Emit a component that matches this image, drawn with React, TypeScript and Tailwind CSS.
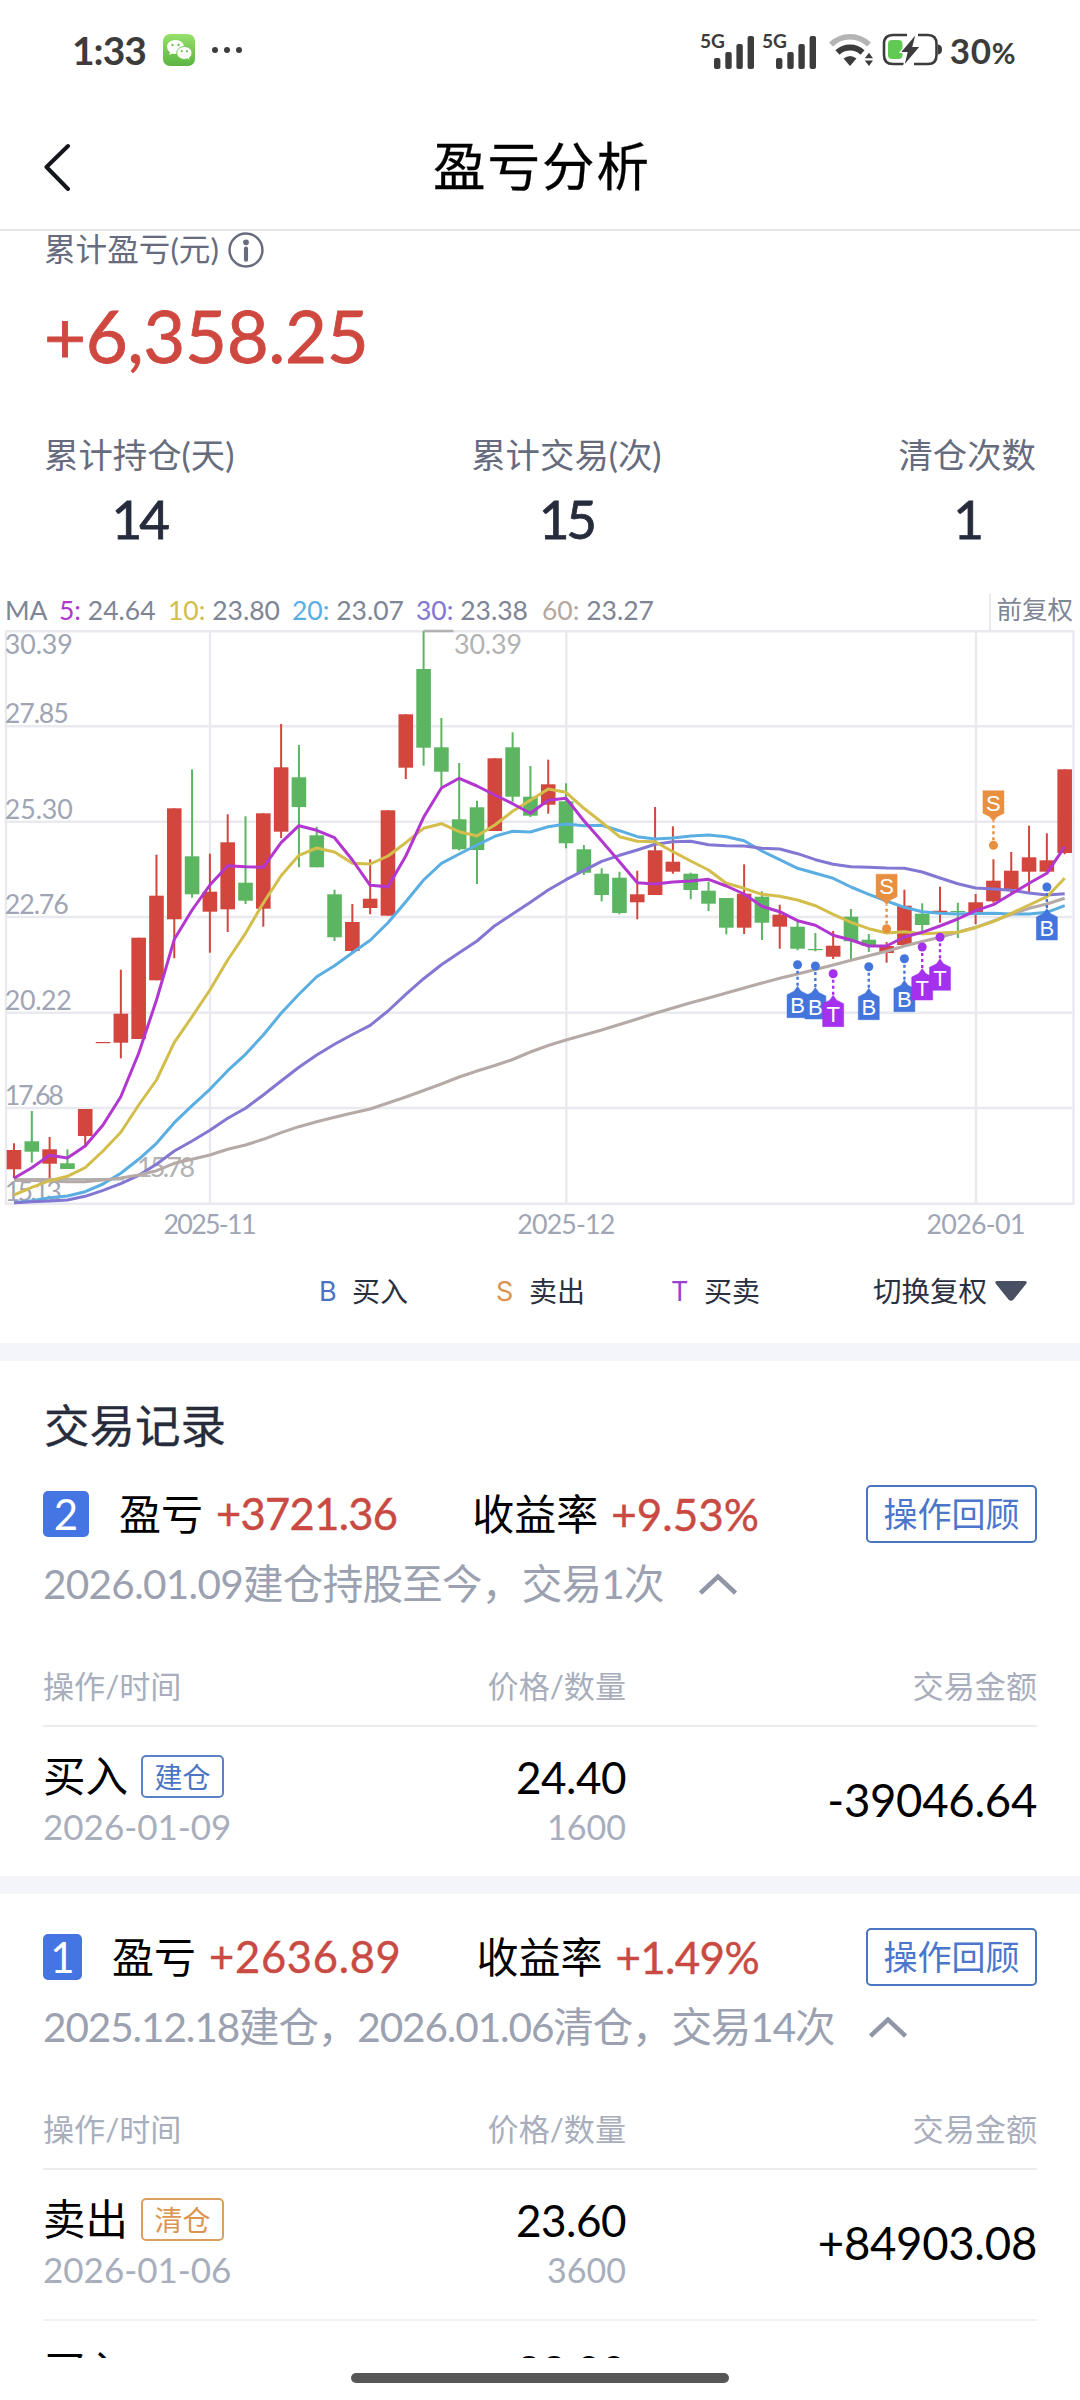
import React from 'react';

type Side = 'B' | 'S' | 'T';

// [direction, body top, body bottom, high, low] in chart space
type Candle = ['r' | 'g', number, number, number, number];

const RED = '#d2463e';
const GREEN = '#5cb561';

const candles: Candle[] = [
  ['r', 570, 589.3, 563.3, 598],
  ['g', 561.3, 571.7, 531, 582.7],
  ['r', 569.3, 583.7, 557, 598],
  ['g', 583.3, 589, 569.3, 589],
  ['r', 529, 556, 529, 567],
  ['r', 462, 463.2, 462, 463],
  ['r', 433.7, 462.7, 389.7, 478.3],
  ['r', 357.7, 459, 357.7, 459],
  ['r', 315.7, 400.3, 274.7, 400.3],
  ['r', 228.3, 339.3, 228.3, 378.3],
  ['g', 276.3, 314.3, 189.3, 317.7],
  ['r', 311.7, 331.7, 273.7, 372.7],
  ['r', 262.3, 329.3, 234.3, 352],
  ['g', 302.7, 320.7, 236.3, 324],
  ['r', 233.3, 328.7, 233.3, 346.7],
  ['r', 187.3, 251.7, 144, 258],
  ['g', 197.3, 227, 165, 287.3],
  ['g', 255.3, 287.3, 246.7, 287.3],
  ['g', 314.3, 357.3, 309.7, 361],
  ['r', 342, 371, 324, 373],
  ['r', 318.7, 328, 279.3, 334.3],
  ['r', 230.3, 335.7, 230.3, 335.7],
  ['r', 134.3, 187.7, 134.3, 199],
  ['g', 89, 167.7, 51, 185.7],
  ['g', 167.3, 191.7, 138, 206.7],
  ['g', 239.3, 269.3, 183, 270.5],
  ['g', 227.3, 270, 220.7, 304],
  ['r', 178.3, 251, 178.3, 251],
  ['g', 167.3, 216.7, 152.3, 221.7],
  ['g', 216.7, 235.7, 186, 237],
  ['r', 204.3, 224.7, 179.7, 233.7],
  ['g', 221.3, 263.3, 203.3, 268.3],
  ['g', 269.3, 292.7, 265, 295],
  ['g', 293.7, 315, 288.3, 321.3],
  ['g', 297.7, 333, 291.7, 334.3],
  ['r', 314.3, 322.3, 290.7, 339.3],
  ['r', 270.3, 315, 227, 315],
  ['r', 281.7, 291.7, 246.3, 293.7],
  ['g', 293.7, 310, 292.7, 319.3],
  ['g', 310.7, 323.7, 301.7, 331],
  ['g', 318, 347.7, 318, 354.3],
  ['r', 313.7, 347.7, 284.3, 354],
  ['g', 316.7, 342.7, 311.3, 360],
  ['r', 334.7, 346.7, 324.7, 368.7],
  ['g', 346.7, 368.7, 341.7, 370.3],
  ['g', 369, 370.2, 353, 371.3],
  ['r', 365.7, 376.7, 351, 379],
  ['g', 336.7, 361.3, 329, 380],
  ['g', 359.7, 366, 354, 372],
  ['r', 366, 373, 362, 382.7],
  ['r', 325.7, 365, 309.7, 365],
  ['g', 333.7, 345, 323.3, 351.7],
  ['r', 330.7, 332.5, 306.7, 342.7],
  ['g', 331, 332.2, 322.7, 358],
  ['r', 322.3, 333, 314, 344.3],
  ['r', 300.7, 321.3, 279.3, 322.7],
  ['r', 290.7, 309, 272, 314],
  ['r', 277.3, 291.7, 245.7, 312.7],
  ['r', 280.3, 291.7, 253.3, 291.7],
  ['r', 189.3, 273, 189.3, 274.3],
];

const ma5 = [
  598.3, 587.7, 575.3, 578, 566, 545, 516.7, 473.3, 420, 359.3, 330, 305, 285.7, 286.7, 287.3, 262.7, 245.7, 250.3, 257.7, 280,
  305.3, 306.7, 276, 237.3, 208, 198.3, 206, 215, 223.7, 233.3, 220.3, 218.3, 240.7, 261, 281.7, 302.7, 304, 302, 301, 299.3,
  306, 314, 326.3, 331.7, 340.7, 345.3, 355.3, 360, 366, 366, 357, 352.3, 346, 339, 330.7, 324.7, 314, 303.3, 293.3, 266.7,
];

const ma10 = [
  615, 607.3, 600.7, 596.3, 587.7, 571, 552.3, 525, 500, 462.3, 436.7, 410, 380, 353.3, 323, 295.7, 275.3, 268, 272, 283.3,
  284, 276, 262.7, 248.3, 243.7, 251.7, 256, 245, 231.3, 220.3, 209, 212.3, 228.3, 242.3, 256.7, 261.3, 261.7, 271.7, 281, 290,
  303.3, 308.3, 314.3, 316.3, 320, 325.7, 334.3, 342.3, 348.7, 353, 351.7, 353.7, 353, 352.3, 347.7, 341.7, 333.3, 325, 316.7, 298.3,
];

const ma20 = [
  622.7, 620.7, 617.7, 616, 611.7, 604, 593.3, 579.3, 563.3, 542.7, 525.7, 509.3, 490.7, 474.3, 455, 433.3, 414.3, 396.7, 385.7, 372.7,
  360.3, 342.7, 321.7, 300, 283.3, 274, 265, 256.3, 251.3, 252, 246.7, 244, 245.7, 245.3, 250.7, 256.7, 259, 258, 256, 255,
  256.7, 260.7, 271, 279.7, 288.3, 293.3, 298.3, 307, 314.3, 321, 327.3, 331.7, 333.3, 334, 333.5, 333.3, 334, 334, 332.3, 325.7,
];

const ma30 = [
  622.7, 621.7, 621, 620, 616.3, 610.3, 603.7, 595.3, 584.3, 571, 561, 550.3, 538.3, 528.3, 515, 501, 487.3, 475, 464.3, 454.5,
  445.3, 431, 414.3, 398.7, 384.7, 372.7, 361, 345.7, 334, 322.3, 310, 299.7, 290.3, 281.3, 275.3, 270, 264.3, 261.7, 261.3, 264.7,
  265.7, 266, 268.3, 269, 273.7, 279.7, 284.3, 286.7, 287.3, 288, 288.3, 292, 298, 303.7, 308, 309, 310.3, 313, 315, 313.7,
];

const ma60 = [
  600.5, 600.5, 601, 601.7, 601.7, 600, 598, 595, 590.7, 583.3, 579.3, 575, 569.3, 565, 559.3, 552.7, 546.7, 541.7, 537.3, 533,
  529, 523, 517, 510.5, 504, 497, 491, 485.5, 479.5, 472, 465.5, 460, 455, 450, 444.5, 439, 433.3, 428, 422.7, 418,
  413, 408, 403, 398.3, 394, 389.5, 385, 380.3, 375.8, 371.3, 366, 361.5, 357.3, 352.3, 347.3, 341, 334.3, 328.3, 324, 318.3,
];

const averages = [
  { color: '#5aaee2', points: ma20 },
  { color: '#8277d2', points: ma30 },
  { color: '#b5aaa6', points: ma60 },
  { color: '#d3be4c', points: ma10 },
  { color: '#b236cf', points: ma5 },
];

const marks: { side: Side; index: number; y: number }[] = [
  { side: 'B', index: 44, y: 384.7 },
  { side: 'B', index: 45, y: 386 },
  { side: 'T', index: 46, y: 393.7 },
  { side: 'B', index: 48, y: 386.7 },
  { side: 'S', index: 49, y: 348.7 },
  { side: 'B', index: 50, y: 378.7 },
  { side: 'T', index: 51, y: 367 },
  { side: 'T', index: 52, y: 357.3 },
  { side: 'S', index: 55, y: 265.3 },
  { side: 'B', index: 58, y: 307 },
];

const sideColor: Record<Side, string> = { B: '#4475dc', S: '#e98f40', T: '#a530ee' };

const priceLabels = [
  { text: '30.39', y: 73.5, width: 68 },
  { text: '27.85', y: 143.3, width: 64 },
  { text: '25.30', y: 239, width: 68 },
  { text: '22.76', y: 334.3, width: 64 },
  { text: '20.22', y: 429.7, width: 67 },
  { text: '17.68', y: 524.7, width: 59 },
  { text: '15.13', y: 621, width: 57 },
];

const dateLabels = [
  { text: '2025-11', x: 210, width: 93 },
  { text: '2025-12', x: 566.3, width: 98 },
  { text: '2026-01', x: 976, width: 99 },
];

const gridLines = [51.3, 146.3, 241.7, 337, 432.7, 528, 623.7];

const cx = (i: number) => 14 + i * 17.808;

const linePath = (points: number[]) => points.map((y, i) => `${i ? 'L' : 'M'}${cx(i).toFixed(1)} ${y}`).join('');

const SignalIcon = () => (
  <svg className="h-[40px] w-[56px]" viewBox="0 -4 56 40" fill="#3c3c3c">
    <text x="0" y="14" fontSize="18.5" fontWeight="700" fontFamily="Lato" textLength="25" lengthAdjust="spacingAndGlyphs">5G</text>
    <rect x="14" y="24" width="6.4" height="11" rx="2" />
    <rect x="25.3" y="18" width="6.4" height="17" rx="2" />
    <rect x="36.4" y="10" width="6.4" height="25" rx="2" />
    <rect x="47.6" y="2" width="6.4" height="33" rx="2" />
  </svg>
);

const WifiIcon = () => (
  <svg className="h-[34px] w-[44px]" viewBox="0 0 44 34" fill="none">
    <path d="M2 11.5A27 27 0 0 1 40 11.5" stroke="#b4b4b4" strokeWidth="5.5" />
    <path d="M8.5 19.5A18 18 0 0 1 33.5 19.5" stroke="#3c3c3c" strokeWidth="6" />
    <path d="M14.5 25.5Q21 20.5 27.5 25.5L21 33Z" fill="#3c3c3c" />
    <path d="M35.8 25.3L40 19.8L44 25.3ZM35.8 27.5L40 33L44 27.5Z" fill="#3c3c3c" />
  </svg>
);

const BatteryIcon = () => (
  <svg className="h-[34px] w-[60px]" viewBox="0 0 60 34" fill="none">
    <path d="M25 2H11Q2 2 2 11V22Q2 31 11 31H22" stroke="#3c3c3c" strokeWidth="2.6" />
    <path d="M36 2H46Q54.5 2 54.5 11V22Q54.5 31 46 31H32" stroke="#3c3c3c" strokeWidth="2.6" />
    <path d="M56 11.5Q60 12 60 16.5T56 21.5Z" fill="#3c3c3c" />
    <rect x="6" y="7" width="14.5" height="19" rx="4" fill="#60ca54" />
    <path d="M34.5 0L18 19.5H25L21.5 33.5L38.5 13.5H31Z" fill="#3c3c3c" stroke="#fff" strokeWidth="1.2" />
  </svg>
);

const WeChatIcon = () => (
  <svg className="h-8 w-8" viewBox="0 0 32 32">
    <defs>
      <linearGradient id="wechat" x1="0" y1="0" x2="0" y2="1">
        <stop offset="0" stopColor="#97e06c" />
        <stop offset="1" stopColor="#5cb443" />
      </linearGradient>
    </defs>
    <rect width="32" height="32" rx="7" fill="url(#wechat)" />
    <path d="M12.5 6C7.5 6 4 9.2 4 13Q4 16.3 7 18.3L6.3 21L9.4 19.5Q11 20 13 20C17.5 20 21 17 21 13S17.5 6 12.5 6Z" fill="#fff" />
    <path d="M21.5 12.5C17 12.5 13.8 15.4 13.8 19S17 25.3 21.3 25.3Q23 25.3 24.5 24.8L27 26.2L26.4 23.8Q29 22 29 19C29 15.4 25.8 12.5 21.5 12.5Z" fill="#fff" stroke="#74c858" strokeWidth="1" />
    <g fill="#6fc552">
      <circle cx="9.5" cy="11" r="1.2" />
      <circle cx="15.5" cy="11" r="1.2" />
      <circle cx="18.8" cy="17.2" r="1.1" />
      <circle cx="24" cy="17.2" r="1.1" />
    </g>
  </svg>
);

const StatusBar = () => (
  <div className="flex h-[104px] items-start justify-between pt-[31px] pr-[64px] pl-[72px] text-[#3c3c3c]">
    <div className="flex h-[38px] items-center">
      <span className="w-[91px] text-[39px] leading-none font-bold tracking-[-1px]">1:33</span>
      <WeChatIcon />
      <div className="ml-[17px] flex gap-1.5">
        <i className="h-1.5 w-1.5 rounded-full bg-[#3c3c3c]" />
        <i className="h-1.5 w-1.5 rounded-full bg-[#3c3c3c]" />
        <i className="h-1.5 w-1.5 rounded-full bg-[#3c3c3c]" />
      </div>
    </div>
    <div className="flex h-[38px] items-center">
      <SignalIcon />
      <div className="ml-1.5"><SignalIcon /></div>
      <div className="ml-[11px]"><WifiIcon /></div>
      <div className="ml-[9px]"><BatteryIcon /></div>
      <span className="ml-[8px] text-[35px] leading-none font-bold tracking-[0.6px]">30<span className="text-[29px]">%</span></span>
    </div>
  </div>
);

const Header = () => (
  <header className="grid h-[127px] grid-cols-[1fr_auto_1fr] items-center border-b-2 border-[#e4e5e8] px-[43px]">
    <svg className="h-[48px] w-[28px]" viewBox="0 0 28 48" fill="none" stroke="#15161c" strokeWidth="4" strokeLinecap="round" strokeLinejoin="round">
      <path d="M25 3L3.5 24L25 46" />
    </svg>
    <h1 className="pl-[4px] text-[52.5px] leading-none tracking-[2px] text-black [-webkit-text-stroke:0.3px]">盈亏分析</h1>
    <span />
  </header>
);

const Stat = ({ label, value }: { label: string; value: string }) => (
  <div className="flex flex-col items-center">
    <span className="flex h-[50px] items-center text-[34.4px] leading-none text-[#666c7e]">{label}</span>
    <span className="mt-[13px] flex h-[50px] items-center text-[53px] leading-none tracking-[-3px] text-[#272c3d] [-webkit-text-stroke:0.8px]">{value}</span>
  </div>
);

const Summary = () => (
  <section className="h-[356px] px-[44px]">
    <div className="flex h-[38px] items-center gap-[9px] text-[31.6px] leading-none text-[#666c7e]">
      <span>累计盈亏(元)</span>
      <svg className="h-[36px] w-[36px]" viewBox="0 0 35 35" fill="none" stroke="#666c7e">
        <circle cx="17.5" cy="17.5" r="16" strokeWidth="2.4" />
        <circle cx="17.5" cy="10" r="2.8" fill="#666c7e" stroke="none" />
        <path d="M17.5 16V27" strokeWidth="4" strokeLinecap="round" />
      </svg>
    </div>
    <div className="mt-[26px] flex h-[80px] items-center text-[72.5px] leading-none tracking-[-0.4px] text-[#ce4840] [-webkit-text-stroke:0.8px]">+6,358.25</div>
    <div className="mt-[55px] flex justify-between">
      <Stat label="累计持仓(天)" value="14" />
      <Stat label="累计交易(次)" value="15" />
      <Stat label="清仓次数" value="1" />
    </div>
  </section>
);

const Mark = ({ side, index, y }: { side: Side; index: number; y: number }) => {
  const x = cx(index);
  const color = sideColor[side];
  const up = side === 'S';
  const body = up
    ? `M${x - 10.5} ${y - 54.5}h21v22.5l-7 3.5l-3.5 4.5l-3.5-4.5l-7-3.5Z`
    : `M${x} ${y + 21.5}l3.5 5l7 3.5v23h-21v-23l7-3.5Z`;
  return (
    <g fill={color}>
      <circle cx={x} cy={y} r="4.5" />
      <path d={`M${x} ${up ? y - 5 : y + 6}V${up ? y - 24 : y + 23}`} stroke={color} strokeWidth="2.4" strokeDasharray="3 3" />
      <path d={body} stroke={color} strokeWidth="0.5" />
      <text x={x} y={up ? y - 34.5 : y + 48.5} textAnchor="middle" fontSize="22" fontFamily="Liberation Sans" fill="#fff">{side}</text>
    </g>
  );
};

const KLineChart = () => (
  <svg className="block h-[624px] w-full" viewBox="0 46 1080 624">
    <g stroke="#e9eaf0" strokeWidth="2.4">
      {gridLines.map((y) => <path key={y} d={`M5 ${y}H1074`} />)}
      {[6, 210, 566.3, 976, 1073.5].map((x) => <path key={x} d={`M${x} 51V624`} />)}
      <path d="M990 46V51" />
    </g>

    {candles.map(([dir, top, bottom, high, low], i) => (
      <g key={i} fill={dir === 'r' ? RED : GREEN}>
        <rect x={cx(i) - 1} y={high} width="2" height={low - high} />
        <rect x={cx(i) - 7.3} y={top} width="14.6" height={bottom - top} />
      </g>
    ))}

    {/* highest and lowest price leaders */}
    <path d="M423.5 51H453.5M14 599.3H124" stroke="#b2b2b2" strokeWidth="2.6" />

    <g fontFamily="Lato" fontSize="26.8" fill="#9fa5b4">
      {priceLabels.map((l) => <text key={l.text} x="4.8" y={l.y} textLength={l.width}>{l.text}</text>)}
      {dateLabels.map((l) => <text key={l.text} x={l.x} y="653.5" textAnchor="middle" textLength={l.width}>{l.text}</text>)}
      <text x="454" y="73.5" textLength="68" fill="#b2b2b2">30.39</text>
      <text x="137" y="596.5" textLength="58" fill="#b2b2b2">15.78</text>
    </g>

    {averages.map((a) => (
      <path key={a.color} d={linePath(a.points)} fill="none" stroke={a.color} strokeWidth="3" strokeLinejoin="round" />
    ))}

    {marks.map((m) => <Mark key={m.index} {...m} />)}
  </svg>
);

const AverageItem = ({ period, value, color, className }: { period: string; value: string; color: string; className: string }) => (
  <span className={className}>
    <span className={color}>{period}</span> {value}
  </span>
);

const ChartLegend = () => (
  <div className="flex h-[39px] items-center justify-between pt-[7px] pl-[5px] text-[26.5px] leading-none text-[#7e8595]">
    <div className="flex whitespace-pre">
      <span className="w-[54px]">MA</span>
      <AverageItem period="5:" value="24.64" color="text-[#b236cf]" className="w-[109px]" />
      <AverageItem period="10:" value="23.80" color="text-[#d3be4c]" className="w-[124px]" />
      <AverageItem period="20:" value="23.07" color="text-[#5aaee2]" className="w-[124px]" />
      <AverageItem period="30:" value="23.38" color="text-[#8277d2]" className="w-[126px]" />
      <AverageItem period="60:" value="23.27" color="text-[#b5a89f]" className="w-[124px]" />
    </div>
    <span className="flex h-full items-center border-l-2 border-[#e9eaf0] pr-[7px] pl-[5px] text-[25.5px]">前复权</span>
  </div>
);

const SideLegend = () => (
  <div className="flex h-[93px] items-center justify-end pr-[53px] pb-[11px] text-[28px] leading-none text-[#2b3040]">
    <span className="flex w-[177px] items-center gap-[13px]"><b className="w-[20px] font-['Inter'] text-[27px] font-normal text-[#4872c4]">B</b>买入</span>
    <span className="flex w-[175px] items-center gap-[13px]"><b className="w-[20px] font-['Inter'] text-[27px] font-normal text-[#dd9350]">S</b>卖出</span>
    <span className="flex w-[202px] items-center gap-[13px]"><b className="w-[20px] font-['Inter'] text-[27px] font-normal text-[#9840cf]">T</b>买卖</span>
    <span className="flex items-center gap-2 text-[28.5px]">
      切换复权
      <svg className="h-[20px] w-[32px]" viewBox="0 0 32 20" fill="#4a5064">
        <path d="M2 0H30Q33 0.5 31 3L18.5 18.5Q16 21 13.5 18.5L1 3Q-1 0.5 2 0Z" />
      </svg>
    </span>
  </div>
);

const Divider = () => <div className="h-[18px] bg-[#f3f5fa]" />;

interface RowProps {
  action: string;
  tag: string;
  tagClass: string;
  date: string;
  price: string;
  count: string;
  amount: string;
}

const TradeRow = ({ action, tag, tagClass, date, price, count, amount }: RowProps) => (
  <div className="flex h-[149px] items-center justify-between">
    <div className="w-[300px]">
      <div className="flex h-[50px] items-center gap-[13px] text-[42.5px] leading-none text-black">
        {action}
        <span className={`flex h-[43px] w-[83px] items-center justify-center rounded-[5px] border-2 text-[28px] ${tagClass}`}>{tag}</span>
      </div>
      <div className="flex h-[50px] items-center text-[35px] leading-none text-[#a8aebc]">{date}</div>
    </div>
    <div className="w-[283px] text-right">
      <div className="flex h-[50px] items-center justify-end text-[44px] leading-none tracking-[-0.5px] text-black">{price}</div>
      <div className="flex h-[50px] items-center justify-end text-[34px] leading-none text-[#a8aebc]">{count}</div>
    </div>
    <div className="flex-1 pb-[3px] text-right text-[45.5px] leading-none tracking-[-0.3px] text-black">{amount}</div>
  </div>
);

interface RecordProps {
  no: number;
  profit: string;
  rate: string;
  note: string;
  badgeClass: string;
  profitClass: string;
  rateClass: string;
  noteClass: string;
  rows: RowProps[];
}

const TradeRecord = ({ no, profit, rate, note, badgeClass, profitClass, rateClass, noteClass, rows }: RecordProps) => (
  <section className="px-[43px]">
    <div className="flex h-[58px] items-center justify-between">
      <div className="flex w-[716px] items-center justify-between text-[42px] leading-none text-black">
        <div className="flex items-center">
          <span className={`flex h-[46px] items-center justify-center rounded-[5px] bg-[#4475e2] text-white ${badgeClass}`}>{no}</span>
          <span className="ml-[30px]">盈亏</span>
          <span className={`ml-[13px] text-[43.5px] text-[#c94a42] [-webkit-text-stroke:0.4px] ${profitClass}`}>{profit}</span>
        </div>
        <div className="flex items-center">
          <span>收益率</span>
          <span className={`ml-[13px] text-[44px] text-[#c94a42] [-webkit-text-stroke:0.4px] ${rateClass}`}>{rate}</span>
        </div>
      </div>
      <button className="h-[58px] w-[171px] rounded-[5px] border-2 border-[#4b76bf] text-[34px] leading-none text-[#4b76cc]">操作回顾</button>
    </div>
    <div className={`mt-[16px] flex h-[50px] items-center text-[40.5px] leading-none text-[#9ba1b0] ${noteClass}`}>
      <span>{note}</span>
      <svg className="ml-[35px] h-[22px] w-[38px]" viewBox="0 0 38 22" fill="none" stroke="#9096a6" strokeWidth="4.5">
        <path d="M1.5 20L19 3.5L36.5 20" />
      </svg>
    </div>
    <div className="mt-[62px] flex h-[54px] items-start justify-between text-[31.1px] leading-none text-[#a8aebc]">
      <span className="w-[300px]">操作/时间</span>
      <span className="w-[283px] text-right">价格/数量</span>
      <span className="flex-1 text-right">交易金额</span>
    </div>
    {rows.map((row) => (
      <div key={row.price} className="border-t-2 border-[#ececef]">
        <TradeRow {...row} />
      </div>
    ))}
  </section>
);

const OPEN_TAG = 'border-[#5b82c4] text-[#4b76c4]';
const CLOSE_TAG = 'border-[#dba05f] text-[#dc9550]';

const records: RecordProps[] = [
  {
    no: 2,
    profit: '+3721.36',
    rate: '+9.53%',
    note: '2026.01.09建仓持股至今，交易1次',
    badgeClass: 'w-[46px]',
    profitClass: 'tracking-[-0.7px]',
    rateClass: 'tracking-[0px]',
    noteClass: 'tracking-[-0.7px]',
    rows: [
      { action: '买入', tag: '建仓', tagClass: OPEN_TAG, date: '2026-01-09', price: '24.40', count: '1600', amount: '-39046.64' },
    ],
  },
  {
    no: 1,
    profit: '+2636.89',
    rate: '+1.49%',
    note: '2025.12.18建仓，2026.01.06清仓，交易14次',
    badgeClass: 'w-[39px]',
    profitClass: 'tracking-[0.7px]',
    rateClass: 'tracking-[-0.7px]',
    noteClass: 'tracking-[-1.1px]',
    rows: [
      { action: '卖出', tag: '清仓', tagClass: CLOSE_TAG, date: '2026-01-06', price: '23.60', count: '3600', amount: '+84903.08' },
    ],
  },
];

export default function App() {
  return (
    <div className="flex h-[2400px] w-[1080px] flex-col overflow-hidden bg-white font-['Lato','Noto_Sans_CJK_SC',sans-serif]">
      <StatusBar />
      <Header />
      <main className="h-[2127px] overflow-hidden">
        <Summary />
        <ChartLegend />
        <KLineChart />
        <SideLegend />
        <Divider />
        <h2 className="flex h-[124px] items-center px-[44px] pt-[6px] text-[45.5px] leading-none text-[#272c3d] [-webkit-text-stroke:0.3px]">交易记录</h2>
        <TradeRecord {...records[0]} />
        <Divider />
        <div className="h-[34px]" />
        <TradeRecord {...records[1]} />
        {/* next row is cut off by the scroll area */}
        <div className="mx-[43px] flex border-t-2 border-[#f2f2f4] pt-[25px] text-[42.5px] leading-[50px] text-black">
          <span className="w-[300px]">买入</span>
          <span className="w-[283px] text-right text-[44px] tracking-[-0.5px]">23.00</span>
        </div>
      </main>
      <footer className="flex flex-1 items-start justify-center pt-[15px]">
        <div className="h-[10px] w-[378px] rounded-full bg-[#575757]" />
      </footer>
    </div>
  );
}
